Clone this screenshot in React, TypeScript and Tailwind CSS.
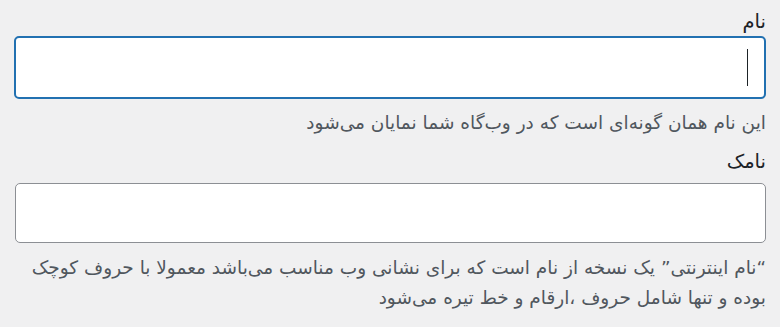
export default function App() {
  return (
    <div
      dir="rtl"
      className="w-[780px] h-[327px] bg-[#f0f0f1] px-[14px] pt-[8px] text-[#1d2327] overflow-hidden"
      style={{ fontFamily: '"DejaVu Sans", "Noto Sans", sans-serif' }}
    >
      <label className="block text-[19.5px] leading-[27px]">نام</label>
      <div className="mt-[1px] h-[63px] w-[752px] rounded-[5px] border-2 border-[#2271b1] bg-white flex items-center pr-[16px]">
        <span className="block w-px h-[37px] bg-[#1d2327]" />
      </div>
      <p className="mt-[10px] text-[18.5px] leading-[28px] text-[#50575e]">
        این نام همان گونه‌ای است که در وب‌گاه شما نمایان می‌شود
      </p>
      <label className="mt-[11px] block text-[19.5px] leading-[27px]">نامک</label>
      <div className="mt-[8px] h-[60px] w-[751px] rounded-[5px] border border-[#8c8f94] bg-white" />
      <p className="mt-[10px] text-[18.5px] leading-[30px] text-[#50575e]">
        “نام اینترنتی” یک نسخه از نام است که برای نشانی وب مناسب می‌باشد معمولا با حروف کوچک
        <br />
        بوده و تنها شامل حروف ،ارقام و خط تیره می‌شود
      </p>
    </div>
  );
}
